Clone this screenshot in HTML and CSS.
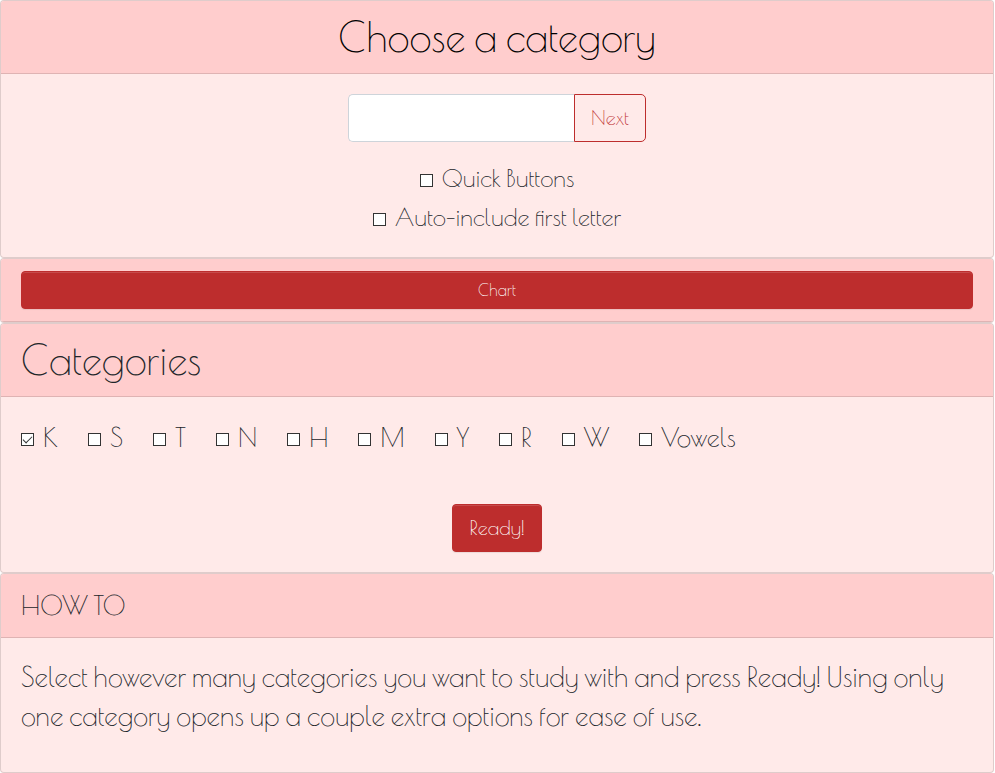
FILE: index.html
```html
<!DOCTYPE html>
<html lang="en">
<head>
<meta charset="utf-8">
<meta name="viewport" content="width=device-width, initial-scale=1">
<title>Choose a category</title>
<link rel="stylesheet" href="styles.css">
</head>
<body>
<section class="card">
  <header class="card-header centered"><h1 class="title">Choose a category</h1></header>
  <form class="card-body quiz">
    <div class="input-group">
      <input class="answer" type="text" aria-label="Answer">
      <button class="btn btn-outline" type="button">Next</button>
    </div>
    <div class="options">
      <label class="check"><input type="checkbox">Quick Buttons</label>
      <label class="check"><input type="checkbox">Auto-include first letter</label>
    </div>
  </form>
</section>
<section class="card">
  <div class="card-header"><button class="btn btn-solid btn-block" type="button">Chart</button></div>
</section>
<section class="card">
  <header class="card-header"><h1 class="heading">Categories</h1></header>
  <form class="card-body picker">
    <div class="categories">
      <label class="check"><input type="checkbox" checked>K</label>
      <label class="check"><input type="checkbox">S</label>
      <label class="check"><input type="checkbox">T</label>
      <label class="check"><input type="checkbox">N</label>
      <label class="check"><input type="checkbox">H</label>
      <label class="check"><input type="checkbox">M</label>
      <label class="check"><input type="checkbox">Y</label>
      <label class="check"><input type="checkbox">R</label>
      <label class="check"><input type="checkbox">W</label>
      <label class="check"><input type="checkbox">Vowels</label>
    </div>
    <button class="btn btn-solid btn-large" type="button">Ready!</button>
  </form>
</section>
<section class="card">
  <header class="card-header">HOW TO</header>
  <div class="card-body">
    <p class="help">Select however many categories you want to study with and press Ready! Using only one category opens up a couple extra options for ease of use.</p>
  </div>
</section>
</body>
</html>
```
FILE: styles.css
```css
*, *::before, *::after { box-sizing: border-box; }
body {
  margin: 0 1px 0 0;
  background: #fff;
  color: #212529;
  font-family: "Poiret One", Lato, "Open Sans", sans-serif;
  font-size: 26px;
  font-weight: 100;
  line-height: 39px;
}
h1, p { margin: 0; font-weight: inherit; }
button, input { font: inherit; margin: 0; }

.card {
  border: 1px solid rgba(0, 0, 0, .125);
  border-radius: 4px;
  background: #ffeae9;
  overflow: hidden;
}
.card-header {
  padding: 12px 20px;
  border-bottom: 1px solid rgba(0, 0, 0, .125);
  background: #ffcdcd;
}
.card-body { padding: 20px; }
.centered { text-align: center; }
.title, .heading { font-size: 40px; line-height: 48px; }
.title { color: #000; }

.quiz, .picker { display: flex; flex-direction: column; align-items: center; }
.input-group { display: flex; width: 298px; max-width: 100%; height: 48px; }
.answer {
  flex: 1;
  min-width: 0;
  padding: 8px 16px;
  border: 1px solid #ced4da;
  border-right: 0;
  border-radius: 5px 0 0 5px;
  background: #fff;
  font-size: 20px;
}
.options { display: flex; flex-direction: column; align-items: center; margin-top: 17px; font-size: 24px; }

.btn { border: 1px solid #bd2d2d; border-radius: 4px; padding: 0 16px; cursor: pointer; }
.btn-outline {
  border-radius: 0 5px 5px 0;
  background: transparent;
  color: #bd2d2d;
  font-size: 20px;
  line-height: 30px;
}
.btn-solid {
  background: #bd2d2d;
  color: #fff;
  box-shadow: inset 0 1px 0 rgba(255, 255, 255, .15), 0 1px 1px rgba(0, 0, 0, .075);
}
.btn-block { display: block; width: 100%; height: 38px; font-size: 16px; line-height: 24px; }
.btn-large { min-width: 90px; height: 48px; margin-top: 46px; font-size: 20px; line-height: 30px; }

.check { display: flex; align-items: center; gap: 9px; }
.check input {
  appearance: none;
  flex: none;
  width: 13px;
  height: 13px;
  margin-top: 3px;
  border: 1px solid #333;
  background: #fff;
}
.check input:checked::before {
  content: "";
  display: block;
  width: 9px;
  height: 5px;
  margin: 2px 1px;
  border: solid #333;
  border-width: 0 0 1px 1px;
  transform: rotate(-45deg);
}
.categories { display: flex; flex-wrap: wrap; align-self: stretch; column-gap: 30px; line-height: 41px; }
.help { margin-bottom: 16px; font-size: 27px; }
```
